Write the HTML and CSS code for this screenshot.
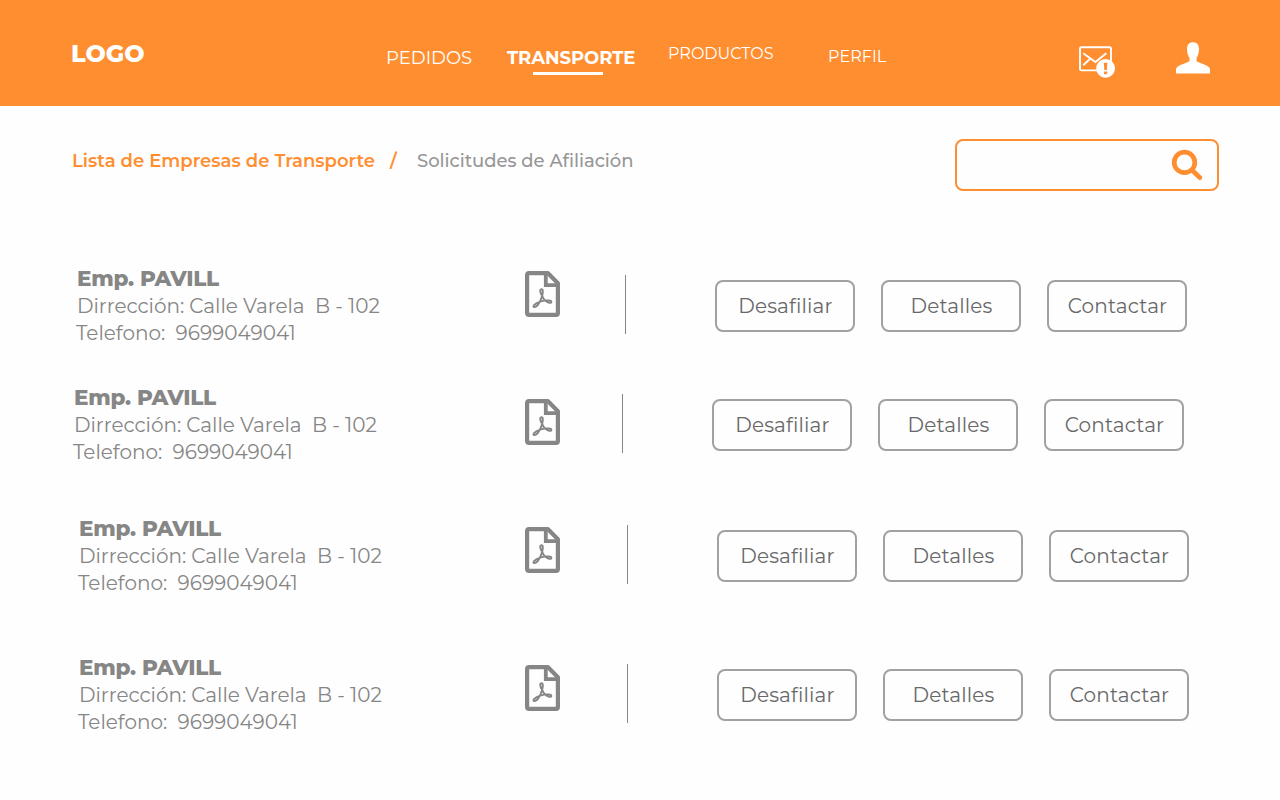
FILE: index.html
```html
<!DOCTYPE html>
<html lang="es">
<head>
<meta charset="utf-8">
<title>Empresas de Transporte</title>
<link rel="stylesheet" href="styles.css">
</head>
<body>
<svg class="defs" width="0" height="0" aria-hidden="true">
  <symbol id="pdf" viewBox="0 0 35 46">
    <path d="M4 2.1H22.8L32.9 12.2V42Q32.9 43.9 31 43.9H4Q2.1 43.9 2.1 42V4Q2.1 2.1 4 2.1Z" fill="none" stroke="#868686" stroke-width="4.2" stroke-linejoin="round"/>
    <path d="M20.8 2V14.2H33" fill="none" stroke="#868686" stroke-width="3.8"/>
    <path d="M17 24.3C14.7 21.3 14.8 18.2 16.5 18.2C18.4 18.2 18 22 17 25.2C15.8 29.3 12.6 36.1 9.5 36.1C7 36.1 8.8 32.5 15.2 30.6C19.7 29.3 26.4 28.6 26.4 31C26.4 32.9 21.3 31.7 19 28.3Q17.5 26.2 17 24.3Z" fill="none" stroke="#868686" stroke-width="1.9"/>
  </symbol>
</svg>
<header class="header">
  <div class="logo">LOGO</div>
  <nav class="nav">
    <a class="pedidos">PEDIDOS</a>
    <a class="transporte">TRANSPORTE</a>
    <a class="productos">PRODUCTOS</a>
    <a class="perfil">PERFIL</a>
  </nav>
  <svg class="mail" width="37" height="33" viewBox="0 0 37 33">
    <rect x="2" y="2.2" width="31" height="23.2" rx="1.5" fill="none" stroke="#fff" stroke-width="1.9"/>
    <path d="M5.2 8.3L17.5 17L28.3 8.3M12.4 13.5L5.2 20.2" fill="none" stroke="#fff" stroke-width="1.9"/>
    <circle cx="27.6" cy="23.3" r="9.4" fill="#fff"/>
    <path d="M25.8 17.8H29.4L28.9 25H26.3ZM26 26.6H29.2V29.2H26Z" fill="#ff8e31"/>
  </svg>
  <svg class="user" width="34" height="32" viewBox="0 0 34 32">
    <path d="M17 .2C13.2 .2 11 2.9 11 7C11 11 12.1 14 13.5 16V18.6Q13.4 19.4 12.6 19.8L4 23.3Q0 25 0 27.5V31.5H34V27.5Q34 25 30 23.3L21.4 19.8Q20.6 19.4 20.5 18.6V16C21.9 14 23 11 23 7C23 2.9 20.8 .2 17 .2Z" fill="#fff"/>
  </svg>
</header>
<main>
  <div class="toolbar">
    <div class="crumbs"><span class="current">Lista de Empresas de Transporte</span><span class="slash">/</span><span class="requests">Solicitudes de Afiliación</span></div>
    <div class="search">
      <svg width="32" height="32" viewBox="0 0 32 32"><circle cx="13.5" cy="13.4" r="10.3" fill="none" stroke="#ff8e31" stroke-width="4.7"/><path d="M21 21L28.8 28.6" stroke="#ff8e31" stroke-width="4.8" stroke-linecap="round"/></svg>
    </div>
  </div>
  <section class="list">
    <article class="row first">
      <div class="info"><h2>Emp. PAVILL</h2><p class="address">Dirrección: Calle Varela&nbsp; B - 102</p><p class="phone">Telefono:&nbsp; 9699049041</p></div>
      <svg class="pdf" width="35" height="46"><use href="#pdf"/></svg>
      <div class="divider"></div>
      <div class="actions"><button>Desafiliar</button><button>Detalles</button><button>Contactar</button></div>
    </article>
    <article class="row second">
      <div class="info"><h2>Emp. PAVILL</h2><p class="address">Dirrección: Calle Varela&nbsp; B - 102</p><p class="phone">Telefono:&nbsp; 9699049041</p></div>
      <svg class="pdf" width="35" height="46"><use href="#pdf"/></svg>
      <div class="divider"></div>
      <div class="actions"><button>Desafiliar</button><button>Detalles</button><button>Contactar</button></div>
    </article>
    <article class="row third">
      <div class="info"><h2>Emp. PAVILL</h2><p class="address">Dirrección: Calle Varela&nbsp; B - 102</p><p class="phone">Telefono:&nbsp; 9699049041</p></div>
      <svg class="pdf" width="35" height="46"><use href="#pdf"/></svg>
      <div class="divider"></div>
      <div class="actions"><button>Desafiliar</button><button>Detalles</button><button>Contactar</button></div>
    </article>
    <article class="row fourth">
      <div class="info"><h2>Emp. PAVILL</h2><p class="address">Dirrección: Calle Varela&nbsp; B - 102</p><p class="phone">Telefono:&nbsp; 9699049041</p></div>
      <svg class="pdf" width="35" height="46"><use href="#pdf"/></svg>
      <div class="divider"></div>
      <div class="actions"><button>Desafiliar</button><button>Detalles</button><button>Contactar</button></div>
    </article>
  </section>
</main>
</body>
</html>
```
FILE: styles.css
```css
* { box-sizing: border-box; }
body { margin: 0; height: 800px; overflow: hidden; background: #fefefe; font-family: Montserrat, Inter, sans-serif; white-space: nowrap; }
h2, p { margin: 0; }
.defs { display: block; }

.header { height: 106px; background: #ff8e31; color: #fff; display: flex; align-items: flex-start; }
.logo { width: 314px; padding-left: 71px; margin-top: 40px; font-size: 24px; line-height: 28px; font-weight: 800; }
.nav { width: 764px; display: flex; align-items: flex-start; padding-left: 72px; }
.nav a { line-height: 22px; font-weight: 400; flex: none; }
.nav .pedidos { width: 121px; margin-top: 47px; font-size: 18px; }
.nav .transporte { width: 161px; margin-top: 47px; font-size: 18px; font-weight: 700; letter-spacing: -0.05px; }
.transporte::after { content: ""; display: block; width: 70px; height: 3px; margin: 3px 0 0 26px; background: #fff; }
.nav .productos { width: 160px; margin-top: 43px; font-size: 16px; }
.nav .perfil { margin-top: 46px; font-size: 16px; letter-spacing: 0.05px; }
.mail { flex: none; margin-top: 45px; }
.user { flex: none; margin: 42px 0 0 61px; }

.toolbar { height: 85px; padding: 33px 61px 0 71px; display: flex; justify-content: space-between; }
.crumbs { display: flex; margin-top: 10px; font-size: 18px; line-height: 24px; }
.current { width: 319px; padding-left: 1px; color: #ff8e31; font-weight: 600; letter-spacing: 0.03px; }
.slash { width: 27px; color: #ff8e31; font-weight: 600; }
.requests { color: #969696; font-weight: 500; letter-spacing: -0.02px; }
.search { width: 264px; height: 52px; border: 2px solid #ff8e31; border-radius: 8px; display: flex; justify-content: flex-end; padding: 8px 14px 0 0; }

.list { padding-top: 74px; }
.row { --shift: 0px; --icon-top: 6px; height: 119px; padding-left: calc(76px + var(--shift)); display: flex; align-items: flex-start; }
.second { --shift: -3px; --icon-top: 15px; height: 131px; }
.third { --shift: 2px; --icon-top: 12px; height: 139px; }
.fourth { --shift: 2px; --icon-top: 11px; }
.info { width: calc(449px - var(--shift)); color: #868686; font-size: 20px; line-height: 27px; font-weight: 400; }
.info h2 { padding: 0 0 2px 1px; font-size: 21.5px; line-height: 26px; font-weight: 800; letter-spacing: -0.25px; }
.address { padding-left: 1px; letter-spacing: -0.03px; }
.phone { letter-spacing: -0.02px; }
.pdf { flex: none; margin-top: var(--icon-top); }
.divider { width: 1px; height: 59px; margin: 10px 89px 0 calc(65px + var(--shift)); background: #868686; }
.actions { display: flex; gap: 26px; padding-top: 15px; }
.actions button { width: 140px; height: 52px; padding: 0 0 0 1px; border: 2px solid #a1a1a1; border-radius: 8px; background: transparent; color: #686868; font: 400 20px/48px Montserrat, Inter, sans-serif; letter-spacing: 0.15px; }
```
